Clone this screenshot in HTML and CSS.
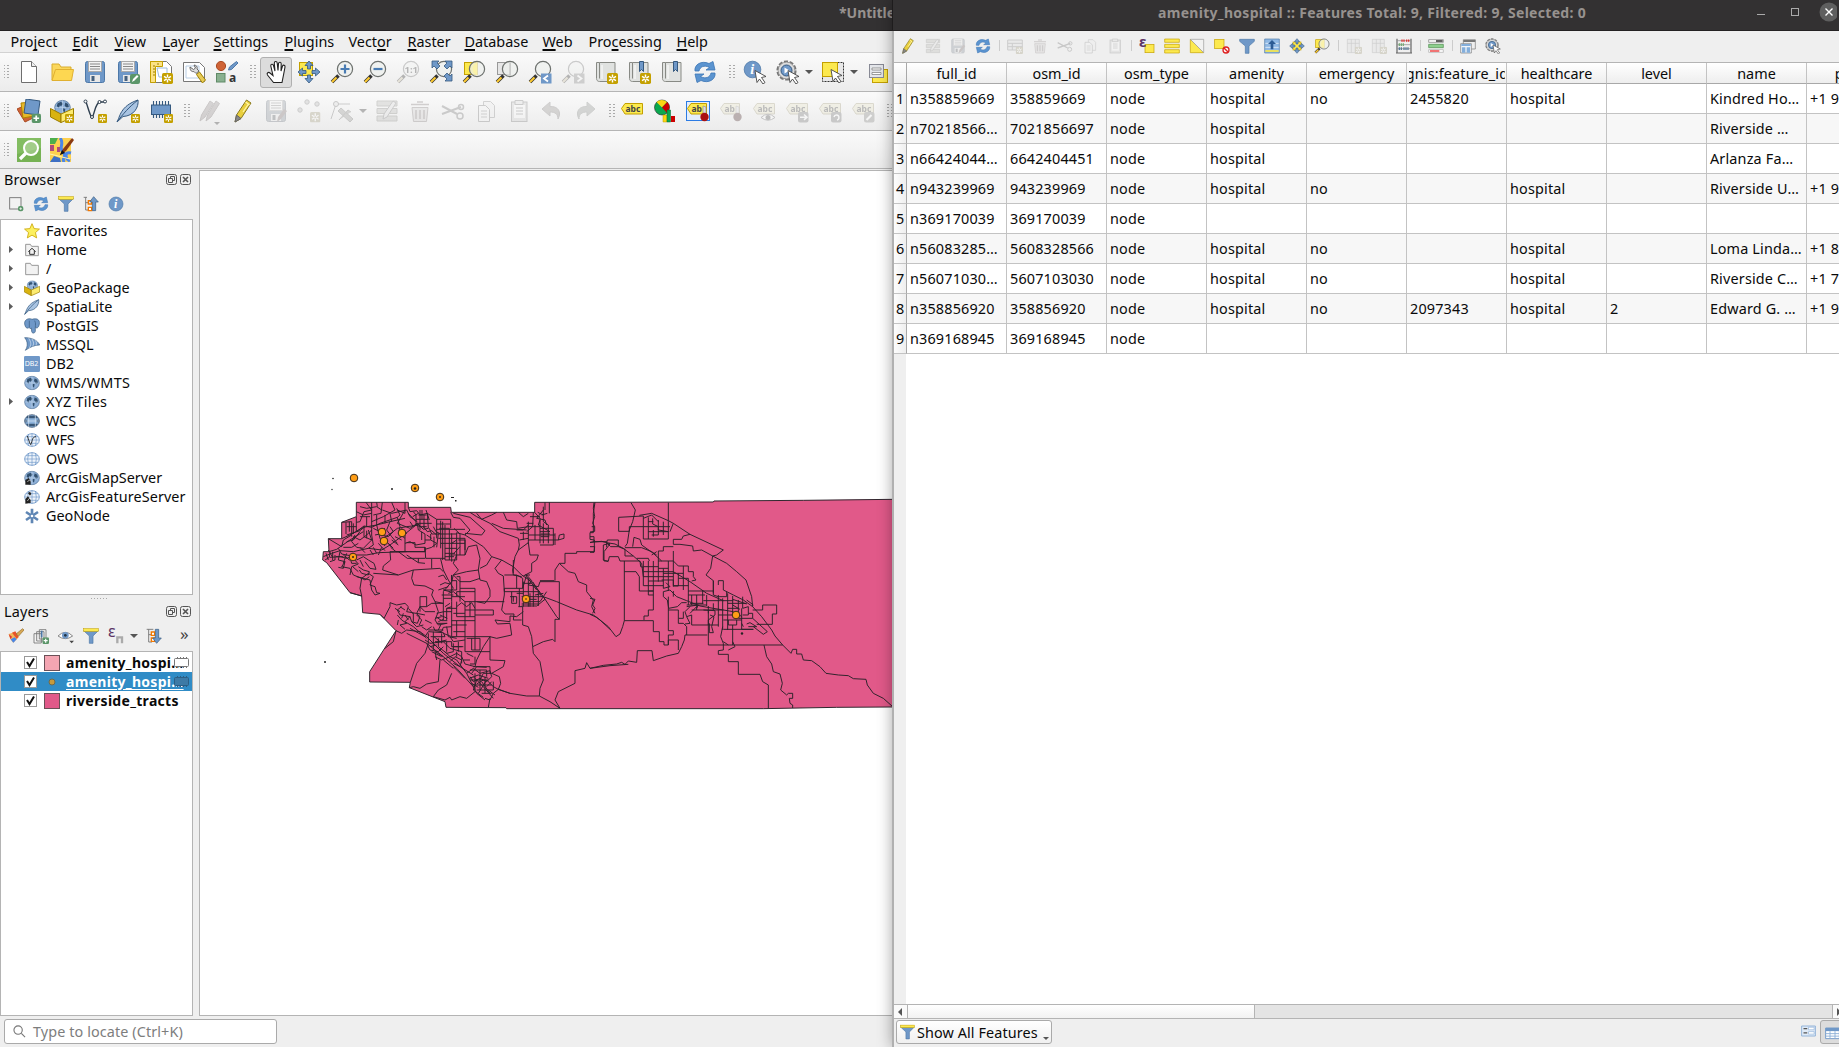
FILE: index.html
```html
<!DOCTYPE html>
<html lang="en">
<head>
<meta charset="utf-8">
<title>QGIS</title>
<link rel="stylesheet" href="styles.css">
</head>
<body>
<svg class="defs" width="0" height="0" aria-hidden="true">
<defs>
<symbol id="star" viewBox="0 0 10 10"><rect width="10" height="10" rx="1.5" fill="#c4a000"/><path d="M5 1.3v7.4M1.8 3.1l6.4 3.8M8.2 3.1L1.8 6.9" stroke="#fff" stroke-width="1.3"/><circle cx="5" cy="5" r="1" fill="#c4a000"/></symbol>
<symbol id="plusb" viewBox="0 0 10 10"><rect width="10" height="10" rx="2" fill="#5b9669"/><path d="M5 2v6M2 5h6" stroke="#fff" stroke-width="1.8"/></symbol>
<symbol id="new" viewBox="0 0 24 24"><path d="M4.500 1.500h10l5 5v16h-15z" fill="#fff" stroke="#6e6e6e"/><path d="M14.500 1.500v5h5" fill="#eee" stroke="#6e6e6e"/></symbol>
<symbol id="open" viewBox="0 0 24 24"><path d="M2 20V4h7l2 3h10v3" fill="#fbd75c" stroke="#d9ad2c"/><path d="M2 20.500L5.500 9.500H23.500L21.500 20.500z" fill="#fdd751" stroke="#e0b030"/></symbol>
<symbol id="save" viewBox="0 0 24 24"><rect x="2.500" y="1.500" width="19" height="21" rx="2" fill="#6f98c8" stroke="#4d78a8"/><rect x="5.500" y="1.500" width="13" height="10" fill="#f3f3f3" stroke="#aaa"/><path d="M7 4h10M7 6.500h10M7 9h10" stroke="#888"/><rect x="7" y="15" width="10" height="7" fill="#e8e8e8"/><rect x="8.500" y="16" width="3" height="5" fill="#45607e"/></symbol>
<symbol id="saveas" viewBox="0 0 24 24"><use href="#save"/><rect x="14" y="14" width="10" height="10" rx="2" fill="#5b9669"/><path d="M16 22l1-3 4-4 1.500 1.500-4 4z" fill="#fff"/></symbol>
<symbol id="newlay" viewBox="0 0 24 24"><path d="M1.500 1.500h16l5 5v16h-21z" fill="#fff" stroke="#777"/><path d="M1.500 1.500h12v5h-7v16h-5z" fill="#fbe285" stroke="#c4a000"/><path d="M4 6h2M4 9h2M4 12h2M4 15h2M9 3v2" stroke="#9b7d00"/><path d="M8 8h10v9h-8z" fill="none" stroke="#9abada"/><use href="#star" x="13" y="13" width="11" height="11"/></symbol>
<symbol id="laymgr" viewBox="0 0 24 24"><path d="M1.500 2.500h16l5 5v14h-21z" fill="#fff" stroke="#777"/><path d="M4 6h13v12H4z" fill="none" stroke="#b8cde4"/><path d="M8 7c0 4 2 5 4 4.500l2 2 3-2.500-2-2c1-2-1-4-3-4l1.500 3-2 1.500z" fill="#ddd" stroke="#666"/><path d="M14.500 14.500l3-2.500 6 8-3 3z" fill="#e8cb55" stroke="#9b7d00"/></symbol>
<symbol id="style" viewBox="0 0 24 24"><circle cx="6" cy="6" r="4.600" fill="#cf6336" stroke="#a94a22"/><path d="M13.500 10l1-3 7-5.500 1.500 1.500-6.500 6.500z" fill="#6f98c8" stroke="#4d78a8"/><rect x="1.500" y="13.500" width="8.500" height="8.500" fill="#89b08f" stroke="#5f8a66"/><text x="14" y="22" font-size="12" fill="#333">a</text></symbol>
<symbol id="hand" viewBox="0 0 24 24"><path d="M8.500 22.500L2.500 15C1.300 13 3.500 11.500 5 13L8 15.500 5.800 6C5.500 4 8 3.500 8.500 5.500L10 11 9.300 3.200C9.300 1 12 1 12.200 3L13 10.500 13.500 3.500C14 1.600 16.300 2 16.200 4L16 11 17.500 6C18.300 4.500 20.300 5 20 7L18.500 15 17 22.500z" fill="#fff" stroke="#222" stroke-width="1.100"/></symbol>
<symbol id="arrows" viewBox="0 0 24 24"><path d="M12 1l4 4.500h-2.500V9h-3V5.500H8zM12 23l4-4.500h-2.500V15h-3v3.500H8zM1 12l4.500-4v2.500H9v3H5.500V16zM23 12l-4.500-4v2.500H15v3h3.500V16z" fill="#6f98c8" stroke="#35597f" stroke-width=".8"/></symbol>
<symbol id="pan" viewBox="0 0 24 24"><rect x="2.500" y="2.500" width="13" height="13" fill="#fce94f" stroke="#c4a000"/><use href="#arrows"/></symbol>
<symbol id="mag" viewBox="0 0 24 24"><path d="M8.500 15.500L2 22" stroke="#333" stroke-width="3.600"/><path d="M6.500 17.500L2 22" stroke="#fcc92f" stroke-width="2.200"/><circle cx="15" cy="9" r="7.600" fill="#eef0ee" fill-opacity=".75" stroke="#6d716e" stroke-width="1.200"/></symbol>
<symbol id="zin" viewBox="0 0 24 24"><use href="#mag"/><path d="M15 4.500v9M10.500 9h9" stroke="#4a7cb3" stroke-width="2.200"/></symbol>
<symbol id="zout" viewBox="0 0 24 24"><use href="#mag"/><path d="M10.500 9h9" stroke="#4a7cb3" stroke-width="2.200"/></symbol>
<symbol id="z11" viewBox="0 0 24 24"><use href="#mag"/><text x="8.500" y="12.500" font-size="9.500" font-weight="700" fill="#333">1:1</text></symbol>
<symbol id="zfull" viewBox="0 0 24 24"><use href="#mag"/><path d="M3 1h7L8 3l3 3-3 3-3-3-2 2zM23 1v7l-2-2-3 3-3-3 3-3-2-2zM23 21h-7l2-2-3-3 3-3 3 3 2-2z" fill="#6f98c8" stroke="#35597f" stroke-width=".8"/></symbol>
<symbol id="zsel" viewBox="0 0 24 24"><rect x="2.500" y="2.500" width="13" height="12" fill="#fce94f" stroke="#c4a000"/><use href="#mag"/><path d="M15 2.500a7 7 0 0 0 0 13z" fill="#fcf3a0" opacity=".8"/></symbol>
<symbol id="zlay" viewBox="0 0 24 24"><rect x="2.500" y="2.500" width="13" height="12" fill="#e6e6e6" stroke="#999"/><use href="#mag"/><path d="M15 3v13" stroke="#bbb"/></symbol>
<symbol id="zlast" viewBox="0 0 24 24"><use href="#mag"/><rect x="13" y="13.500" width="10.500" height="10" fill="#6f98c8"/><path d="M20 15.500l-4 3 4 3" fill="none" stroke="#fff" stroke-width="1.800"/></symbol>
<symbol id="znext" viewBox="0 0 24 24"><use href="#mag"/><rect x="13" y="13.500" width="10.500" height="10" fill="#888"/><path d="M16.500 15.500l4 3-4 3" fill="none" stroke="#fff" stroke-width="1.800"/></symbol>
<symbol id="scroll" viewBox="0 0 24 24"><path d="M5.500 2.500h15.500v19H5.500c-3 0-3-3-3-3V2.500h3v16" fill="#e0e2e0" stroke="#888a85"/><path d="M8 5v14" stroke="#fff"/></symbol>
<symbol id="mapv" viewBox="0 0 24 24"><use href="#scroll"/><use href="#star" x="13" y="13" width="11" height="11"/></symbol>
<symbol id="bm" viewBox="0 0 24 24"><path d="M12.500 1.500h4v10l-2-2-2 2z" fill="#6f98c8" stroke="#35597f"/></symbol>
<symbol id="nbm" viewBox="0 0 24 24"><use href="#scroll"/><use href="#bm"/><use href="#star" x="13" y="13" width="11" height="11"/></symbol>
<symbol id="sbm" viewBox="0 0 24 24"><use href="#scroll"/><use href="#bm" x="1"/></symbol>
<symbol id="refresh" viewBox="0 0 24 24"><path d="M2 11C1 5 8 0 16 3.500L20 1.500 22 10H13L16.500 7.500C11 4.500 7 7 6 11zM22 13C23 19 16 24 8 20.500L4 22.500 2 14H11L7.500 16.500C13 19.500 17 17 18 13z" fill="#5b94d0" stroke="#3d76b5" stroke-width=".8"/></symbol>
<symbol id="cursor" viewBox="0 0 24 24"><path d="M12 10.500l11 6-4.500 1 3.500 5-2 1.500-3.500-5-2.500 3.500z" fill="#fff" stroke="#444" stroke-width=".9"/></symbol>
<symbol id="info" viewBox="0 0 24 24"><circle cx="12" cy="12" r="10.500" fill="#6f98c8" stroke="#4d78a8"/><text class="serif" x="9" y="18" font-size="18" font-style="italic" font-weight="700" fill="#fff">i</text></symbol>
<symbol id="ident" viewBox="0 0 24 24"><use href="#info" width="19" height="19"/><use href="#cursor"/></symbol>
<symbol id="gear" viewBox="0 0 24 24"><circle cx="10.500" cy="10.500" r="8.900" fill="none" stroke="#777" stroke-width="2.400" stroke-dasharray="4 1.592"/><circle cx="10.500" cy="10.500" r="8.400" fill="#dcdcdc" stroke="#888" stroke-width=".8"/><circle cx="10.500" cy="10.500" r="5.500" fill="#6f98c8" stroke="#35597f"/><path d="M8.500 7.500l5 3-5 3z" fill="#fff"/><use href="#cursor"/></symbol>
<symbol id="select" viewBox="0 0 24 24"><rect x="1.500" y="2.500" width="21" height="19" fill="#e8e8e8" stroke="#333" stroke-dasharray="2 1"/><rect x="1.500" y="2.500" width="15" height="14" fill="#fce94f" stroke="#c4a000"/><use href="#cursor" x="-2" y="-1"/></symbol>
<symbol id="form" viewBox="0 0 24 24"><rect x="6.500" y="9.500" width="15" height="13" fill="#fce94f" stroke="#c4a000"/><rect x="3.500" y="4.500" width="14" height="13" fill="#e4e6ea" stroke="#888a95"/><path d="M6 8h9v2H6zM6 12.500h9v2H6z" fill="#fff" stroke="#777" stroke-width=".7"/></symbol>
<symbol id="dsm" viewBox="0 0 24 24"><path d="M0 10L11 5l7 13-10 5z" fill="#cf6336" stroke="#a94a22"/><path d="M4 4l11-1 2 14-11 2z" fill="#e8b82a" stroke="#b08500"/><path d="M9 0l14 2-2 14-14-2z" fill="#6f98c8" stroke="#35597f"/><use href="#plusb" x="14.500" y="14.500" width="9.500" height="9.500"/></symbol>
<symbol id="globe" viewBox="0 0 24 24"><ellipse cx="12" cy="12" rx="11" ry="10" fill="#8fb1d8" stroke="#4a6c92"/><path d="M5 6l5-2 3 3-3 3-2-1-1 4-3-3zM13 13l3 1-1 5-2-2zM16 5l4 2 1 5-3 1-3-4z" fill="#31506f"/><path d="M2 12h20M12 2v20" stroke="#c6d8ec" stroke-width=".8"/></symbol>
<symbol id="gpkg" viewBox="0 0 24 24"><use href="#globe" x="4" y="0" width="17" height="17"/><path d="M.5 9.500L11 15v8.500L.5 18z" fill="#d9b310" stroke="#9b7d00"/><path d="M11 15l12.500-5.500V18L11 23.500z" fill="#fceb70" stroke="#9b7d00"/></symbol>
<symbol id="ngpkg" viewBox="0 0 24 24"><use href="#gpkg"/><use href="#star" x="15" y="15" width="9" height="9"/></symbol>
<symbol id="vee" viewBox="0 0 24 24"><path d="M3 3C5 8 6 14 9 19C12 14 12 4 17 3H22" fill="none" stroke="#2f3f4f" stroke-width="1.400"/><g fill="#fff" stroke="#2f3f4f"><circle cx="2.500" cy="2.500" r="1.500"/><circle cx="9" cy="18" r="1.500"/><circle cx="16.500" cy="3" r="1.500"/><circle cx="22" cy="2.500" r="1.500"/></g></symbol>
<symbol id="nshp" viewBox="0 0 24 24"><use href="#vee"/><use href="#star" x="15" y="15" width="9" height="9"/></symbol>
<symbol id="feather" viewBox="0 0 24 24"><path d="M1 23C4 18 4 7 22 1C23 8 18 17 7 17.500z" fill="#a9c4e2" stroke="#35597f"/><path d="M1 23C7 15 13 8 22 1" fill="none" stroke="#35597f"/></symbol>
<symbol id="nspl" viewBox="0 0 24 24"><use href="#feather"/><use href="#star" x="15" y="15" width="9" height="9"/></symbol>
<symbol id="mem" viewBox="0 0 24 24"><path d="M4.500 2v17M7.500 2v17M10.500 2v17M13.500 2v17M16.500 2v17M19.500 2v17" stroke="#35597f" stroke-width="1.100"/><rect x="2.500" y="6" width="19" height="9.500" fill="#6f98c8" stroke="#35597f"/></symbol>
<symbol id="nmem" viewBox="0 0 24 24"><use href="#mem"/><use href="#star" x="15" y="15" width="9" height="9"/></symbol>
<symbol id="pencil" viewBox="0 0 24 24"><path d="M4 23l1.500-7L15.500 1l4.500 3L10 19.500z" fill="#e9cf3c" stroke="#8a7a20"/><path d="M4 23l1.500-7 4.500 3.500z" fill="#888" stroke="#666"/><path d="M14.500 3l4 3M12 13L17.500 5" stroke="#fff6a8" stroke-width="1.200"/></symbol>
<symbol id="pencils" viewBox="0 0 24 24"><g fill="#a88" stroke="#866"><path d="M2 22l1.500-6L12 2l3.500 2.500L7 18z"/><path d="M8 22l1.500-6L18 2l3.500 2.500L13 18z"/></g></symbol>
<symbol id="savee" viewBox="0 0 24 24"><use href="#save"/><path d="M13 23l1-5 6-8 3 2-6 8z" fill="#a66"/></symbol>
<symbol id="pts" viewBox="0 0 24 24"><g fill="#bbb" stroke="#777"><circle cx="10" cy="3" r="2.200"/><circle cx="20" cy="5" r="2.200"/><circle cx="3" cy="11" r="2.200"/></g><use href="#star" x="13" y="13" width="10.500" height="10.500"/></symbol>
<symbol id="vtx" viewBox="0 0 24 24"><path d="M1 20L6 5H20" fill="none" stroke="#777"/><circle cx="6" cy="5" r="2.500" fill="#ddd" stroke="#666"/><path d="M8 12l3-3 12 11-3 3zM9 21l9-10 3 2" fill="#998" stroke="#776"/></symbol>
<symbol id="edit" viewBox="0 0 24 24"><path d="M2 2h20v5H2zM2 9.500h20v5H2zM2 17h20v5H2z" fill="#bcbcaa" stroke="#888870"/><path d="M8 20l1-5L18 2l3 2-9 14z" fill="#ddd" stroke="#777"/></symbol>
<symbol id="trash" viewBox="0 0 24 24"><path d="M4 8.500h16l-1.500 14h-13z" fill="#dcc" stroke="#977"/><path d="M3 5.500h18M9 3h6M8 11v9M12 11v9M16 11v9" stroke="#977" stroke-width="1.600"/></symbol>
<symbol id="cut" viewBox="0 0 24 24"><path d="M1 7L16 15M1 15L20 8" stroke="#777" stroke-width="2"/><circle cx="19" cy="17" r="3" fill="none" stroke="#777" stroke-width="1.500"/><circle cx="20" cy="8" r="2.500" fill="none" stroke="#777" stroke-width="1.500"/></symbol>
<symbol id="copy" viewBox="0 0 24 24"><path d="M9.500 2.500h7l4 4v12h-11z" fill="#eee" stroke="#888"/><path d="M4.500 6.500h7l4 4v12h-11z" fill="#f4f4f4" stroke="#777"/><path d="M7 12h6M7 15h6M7 18h6" stroke="#888"/></symbol>
<symbol id="paste" viewBox="0 0 24 24"><rect x="4.500" y="3" width="15.500" height="19.500" fill="#ccc" stroke="#777"/><path d="M7 6h11v13H7z" fill="#fafafa"/><path d="M8 1.500h8v4H8zM9 9h7M9 12h7M9 15h7" fill="#ddd" stroke="#777"/></symbol>
<symbol id="undo" viewBox="0 0 24 24"><path d="M2 10L10 3v4.500C18 7 22 13 18 20C18 15 15 13 10 13v4z" fill="#a09080" stroke="#877"/></symbol>
<symbol id="redo" viewBox="0 0 24 24"><path d="M22 10L14 3v4.500C6 7 2 13 6 20C6 15 9 13 14 13v4z" fill="#889888" stroke="#787"/></symbol>
<symbol id="abc" viewBox="0 0 24 24"><path d="M1.500 9.500L5 4.500H22.500V15H5z" fill="#fce94f" stroke="#c4a000"/><text x="5.500" y="12.700" font-size="8.500" font-weight="700" fill="#444">abc</text></symbol>
<symbol id="diag" viewBox="0 0 24 24"><circle cx="9" cy="8.500" r="7.500" fill="#0aa84f" stroke="#222" stroke-width=".6"/><path d="M9 8.500L3.500 3A8 8 0 0 1 14 3z" fill="#fcd612"/><path d="M9 8.500L14.300 3A8 8 0 0 1 14 14z" fill="#c00"/><path d="M10 16h4v7h-4z" fill="#fcd612" stroke="#b90" stroke-width=".5"/><path d="M14 11h3.500v12H14z" fill="#0aa84f" stroke="#063" stroke-width=".5"/><path d="M18 17h4v6h-4z" fill="#c00"/></symbol>
<symbol id="pin" viewBox="0 0 24 24"><path d="M1.500 9.500L5 4.500H20.500V15H5z" fill="#fce94f" stroke="#c4a000"/><text x="5.500" y="12.700" font-size="8.500" font-weight="700" fill="#444">ab</text><path d="M17 7l3 1v7l-3-1z" fill="#ddd" stroke="#888" stroke-width=".6"/><circle cx="18.500" cy="18" r="4.200" fill="#a11"/></symbol>
<symbol id="pinhl" viewBox="0 0 24 24"><rect x=".5" y="2.500" width="23" height="19" fill="#e4eefa" stroke="#2b7be4"/><use href="#pin"/></symbol>
<symbol id="abceye" viewBox="0 0 24 24"><use href="#abc"/><path d="M9 18.500Q16 12 23 18.500Q16 24 9 18.500z" fill="#fff" stroke="#666"/><circle cx="16" cy="18.500" r="2.500" fill="#555"/></symbol>
<symbol id="abcmv" viewBox="0 0 24 24"><use href="#abc"/><rect x="13" y="13" width="10.500" height="10.500" rx="2" fill="#777"/><path d="M15 18.200h6M19 15.500l3 2.700-3 2.700" fill="none" stroke="#fff" stroke-width="1.500"/></symbol>
<symbol id="abcrot" viewBox="0 0 24 24"><use href="#abc"/><rect x="13" y="13" width="10.500" height="10.500" rx="2" fill="#777"/><path d="M16 18a2.500 2.500 0 1 1 3 3" fill="none" stroke="#fff" stroke-width="1.500"/></symbol>
<symbol id="abced" viewBox="0 0 24 24"><use href="#abc"/><rect x="13" y="13" width="10.500" height="10.500" rx="2" fill="#887"/><path d="M15.500 21l5-5" stroke="#fff" stroke-width="2.200"/></symbol>
<symbol id="osm" viewBox="0 0 24 24"><rect width="24" height="24" fill="#76b254"/><path d="M0 0h24v10L0 16z" fill="#8cc46c" opacity=".6"/><circle cx="14" cy="10" r="7" fill="#ffffff40" stroke="#fff" stroke-width="2"/><path d="M9 15L3 21" stroke="#fff" stroke-width="3.200"/></symbol>
<symbol id="osmed" viewBox="0 0 24 24"><rect width="21" height="24" fill="#fdd04e"/><path d="M0 0h8L5 6H0z" fill="#4cae4c"/><path d="M10 0C15 5 8 10 13 14S10 22 15 24M21 15C14 13 15 21 20 23" fill="none" stroke="#4a86e8" stroke-width="3"/><path d="M0 7h4v6H0zM7 9h3v5H7z" fill="#b04a78"/><path d="M0 24l4-6 6 2 1 4z" fill="#3d6fc4"/><path d="M0 16l20 5" stroke="#fff3b0"/><path d="M10 17l3-6L22 0l2 2-8 11z" fill="#8a3a12"/><path d="M10 17l2-5 3 3z" fill="#111"/></symbol>
<symbol id="fold" viewBox="0 0 24 24"><path d="M2.500 20.500v-17h7l2 3h10v14z" fill="#f2f2f2" stroke="#8a8a8a" stroke-width="1.300"/></symbol>
<symbol id="home" viewBox="0 0 24 24"><use href="#fold"/><path d="M6.500 14.500l5.500-5 5.500 5M8.500 13v5.500h7v-5.500" fill="none" stroke="#333" stroke-width="1.500"/></symbol>
<symbol id="fav" viewBox="0 0 24 24"><path d="M12 1l3.200 7.400 8 .7-6 5.300 1.800 8L12 18.200 5 22.400l1.800-8-6-5.300 8-.7z" fill="#fcf05f" stroke="#c9a300" stroke-width="1.200"/></symbol>
<symbol id="pg" viewBox="0 0 24 24"><path d="M1 9C0 1 9 0 12 2C19 0 24 2 23 9C22 15 19 16 17 14V20C16 24 11.500 23 11.500 20L11 15C9 17 8 15 8 14C4 17 2 14 1 9z" fill="#6f98c8" stroke="#35597f"/><path d="M8 4v10M16 4C18 8 17 10 17 14" fill="none" stroke="#35597f"/></symbol>
<symbol id="ms" viewBox="0 0 24 24"><path d="M1 1C10 1 20 4 23.500 12C16 12 9 15 2 20C6 14 6 7 1 1z" fill="#6f98c8" stroke="#35597f"/><path d="M7 2C11 8 11 12 8 16.500M12 3C15 8 15 11 13 14M17 5C19 8 19 10 18 12.500" fill="none" stroke="#dce8f5"/></symbol>
<symbol id="db2" viewBox="0 0 24 24"><rect y="0" width="24" height="24" rx="2" fill="#6f98c8"/><text x="1" y="15.500" font-size="10.500" fill="#fff">DB2</text></symbol>
<symbol id="grid" viewBox="0 0 24 24"><ellipse cx="12" cy="12" rx="11" ry="9.500" fill="#eef4fb" stroke="#6f98c8" stroke-width="1.300"/><path d="M1 12h22M3 7h18M3 17h18M12 2v20M7 3Q4 12 7 21M17 3Q20 12 17 21" fill="none" stroke="#6f98c8"/></symbol>
<symbol id="wcs" viewBox="0 0 24 24"><ellipse cx="12" cy="12" rx="11" ry="9.500" fill="#8fb4dc" stroke="#24405f"/><path d="M5 4h14l2 4H3zM3 16h18l-3 4H6zM1 10h4v4H1zM19 10h4v4h-4z" fill="#3a5878"/><path d="M7 3v18M17 3v18M1 12h22" stroke="#dce8f5"/></symbol>
<symbol id="wfs" viewBox="0 0 24 24"><use href="#grid"/><path d="M5 6c2 5 3 10 5 13 3-6 2-12 8-12" fill="none" stroke="#333" stroke-width="1.500"/></symbol>
<symbol id="arcm" viewBox="0 0 24 24"><use href="#globe"/><path d="M2 22V15l5-3 3 4v6z" fill="#222"/><path d="M5 18l3-3 3 2" stroke="#eee" fill="none"/></symbol>
<symbol id="arcf" viewBox="0 0 24 24"><use href="#grid"/><path d="M2 22V15l4-4 4 5v5zM6 6l3-2 2 3-2 3z" fill="#222"/><path d="M5 18l3-4 3 2" stroke="#eee" fill="none"/></symbol>
<symbol id="gn" viewBox="0 0 24 24"><path d="M12 1v22M3 6l18 12M21 6L3 18" stroke="#5f86b4" stroke-width="4"/><circle cx="12" cy="12" r="2" fill="#fff"/></symbol>
<symbol id="funnel" viewBox="0 0 24 24"><path d="M1 4h22l-8 8v11H9.500V12z" fill="#6f98c8" stroke="#4d78a8"/><rect x="1" y="1" width="22" height="4" fill="#fce94f" stroke="#c4a000" stroke-width=".8"/></symbol>
<symbol id="bfun" viewBox="0 0 24 24"><path d="M1 2h22v3l-8 7v11H9.500V12L1 5z" fill="#6f98c8" stroke="#4d78a8"/></symbol>
<symbol id="addl" viewBox="0 0 24 24"><rect x="2.500" y="2.500" width="17" height="17" fill="#f2f2f2" stroke="#777" stroke-width="1.400"/><rect x="15" y="15" width="8" height="8" rx="3" fill="#5b9669"/><path d="M19 17v4M17 19h4" stroke="#fff"/></symbol>
<symbol id="coll" viewBox="0 0 24 24"><path d="M1 2h5M4 2v19h5M4 10h5" fill="none" stroke="#777" stroke-width="1.400"/><path d="M8 7h5v5H8zM8 17h5v5H8z" fill="#fff" stroke="#f57900" stroke-width="2"/><path d="M16 1l7 8h-4v13h-5V9h-4z" fill="#6f98c8" stroke="#35597f"/></symbol>
<symbol id="expd" viewBox="0 0 24 24"><path d="M1 2h10M4 2v19h5M4 10h5" fill="none" stroke="#777" stroke-width="1.400"/><path d="M8 6h5v5H8zM8 15h5v5H8z" fill="#fff" stroke="#f57900" stroke-width="2"/><path d="M16 23l7-8h-4V2h-5v13h-4z" fill="#6f98c8" stroke="#35597f"/></symbol>
<symbol id="brush" viewBox="0 0 24 24"><path d="M1 9l9-3 6 8-8 8C5 20 2 15 1 9z" fill="#f3b65a"/><path d="M1 9l5 4-2 4z" fill="#d33"/><path d="M4 17l6-3 3 3-5 5z" fill="#4a86e8"/><path d="M6 7l5-2 5 8-3 3z" fill="#e8532a"/><path d="M12 9L22 1l2 2-8 9z" fill="#d8a854" stroke="#96702a"/></symbol>
<symbol id="addg" viewBox="0 0 24 24"><path d="M1.500 8.500h11v14h-11zM5.500 5.500h11v14h-11zM9.500 2.500h10v14h-10z" fill="#f2f2f2" stroke="#777" stroke-width="1.300"/><path d="M13 4v10" stroke="#4d78a8" stroke-width="2.500"/><use href="#plusb" x="14" y="14" width="10" height="10"/></symbol>
<symbol id="eye" viewBox="0 0 24 24"><path d="M0 12Q11 1 22 12Q11 20 0 12z" fill="#fff" stroke="#888" stroke-width="1.500"/><circle cx="11" cy="11" r="5" fill="#6f98c8"/><circle cx="11" cy="11" r="2" fill="#234"/><path d="M17 19h7l-3.500 4z" fill="#444"/></symbol>
<symbol id="eps" viewBox="0 0 24 24"><text x="0" y="14" font-size="24" fill="#5c3566">ε</text><path d="M14 23v-9h7v9" fill="none" stroke="#aaa" stroke-width="3.500"/></symbol>
<symbol id="selx" viewBox="0 0 24 24"><rect x="9" y="9.500" width="13.500" height="12.500" fill="#fce94f" stroke="#c4a000"/><text x="0" y="13" font-size="22" font-weight="700" fill="#5c3566">ε</text></symbol>
<symbol id="selall" viewBox="0 0 24 24"><path d="M1 1.500h22v5H1zM1 9.500h22v5H1zM1 17.500h22v5H1z" fill="#fce94f" stroke="#c4a000"/></symbol>
<symbol id="inv" viewBox="0 0 24 24"><path d="M2 2v20h20z" fill="#fce94f" stroke="#c4a000"/><path d="M2 2h20v20z" fill="#f2f2f2" stroke="#999"/></symbol>
<symbol id="desel" viewBox="0 0 24 24"><rect x="1" y="2" width="14" height="14" fill="#fce94f" stroke="#c4a000"/><circle cx="18" cy="18" r="4.500" fill="#fff" stroke="#d22" stroke-width="2"/><path d="M15 15l6 6" stroke="#d22" stroke-width="2"/></symbol>
<symbol id="top" viewBox="0 0 24 24"><path d="M1 1.500h22v21H1z" fill="#8fb8e4" stroke="#4d78a8"/><path d="M2 8h20M2 14h20" stroke="#fff"/><path d="M2 18h20v3H2z" fill="#e8e060"/><path d="M12 3l6 6h-4v8h-4V9H6z" fill="#2d5c94"/></symbol>
<symbol id="pansel" viewBox="0 0 24 24"><rect x="6" y="6" width="12" height="12" fill="#fce94f" stroke="#c4a000"/><use href="#arrows"/></symbol>
<symbol id="fld" viewBox="0 0 24 24"><path d="M2 2h18v20H2zM2 8h18M8 2v20M14 2v20" fill="#ddd" stroke="#888"/><use href="#star" x="13" y="13" width="11" height="11"/></symbol>
<symbol id="row" viewBox="0 0 24 24"><path d="M1 3h22v15H1zM1 8h22M1 13h22M8 8v10" fill="#ddd" stroke="#888" stroke-width="1.500"/><use href="#star" x="13" y="13" width="11" height="11"/></symbol>
<symbol id="abacus" viewBox="0 0 24 24"><path d="M1.500 1v22M22.500 1v22M0 22.500h24" stroke="#666" stroke-width="1.800"/><path d="M2 4h20M2 10h20M2 16h20" stroke="#888"/><path d="M8 4h5M15 4h5" stroke="#d33" stroke-width="3.500" stroke-dasharray="2 1"/><path d="M4 10h9" stroke="#7a7" stroke-width="4" stroke-dasharray="2 1"/><path d="M4 16h5M11 16h9" stroke="#5a7a98" stroke-width="4" stroke-dasharray="2 1"/></symbol>
<symbol id="cond" viewBox="0 0 24 24"><path d="M1 2.500h22v4H1z" fill="#fff" stroke="#777"/><path d="M1 9.500h22v5H1z" fill="#8ed08e" stroke="#4a8a4a"/><path d="M1 17.500h22v4H1z" fill="#fff" stroke="#aaa"/><path d="M12 4.500h10" stroke="#444" stroke-width="2.500"/><path d="M3 19.500h14" stroke="#e33" stroke-width="2"/></symbol>
<symbol id="dock" viewBox="0 0 24 24"><path d="M5 2.500h18v14H5z" fill="#eee" stroke="#777"/><path d="M5 3h18v3H5z" fill="#777"/><path d="M1 8.500h16v14H1z" fill="#eef4fb" stroke="#777"/><path d="M2 9h14v3H2zM3 14h5v8H3zM10 14h5v8h-5z" fill="#83aedb"/></symbol>
<symbol id="fv" viewBox="0 0 24 24"><path d="M1 4h22v16H1z" fill="#e0ebf7" stroke="#8fb1d8" stroke-width="1.500"/><path d="M4 8h6M4 15h6" stroke="#555" stroke-width="2"/><path d="M12 6h9v4h-9zM12 13h9v4h-9z" fill="#fff" stroke="#8fb1d8"/></symbol>
<symbol id="tv" viewBox="0 0 24 24"><path d="M1 4h22v17H1z" fill="#fff" stroke="#6f98c8" stroke-width="1.500"/><path d="M1 4h22v5H1z" fill="#6f98c8"/><path d="M1 13h22M1 17h22M8 9v12M16 9v12" stroke="#8fb1d8" stroke-width="1.500"/></symbol>
<symbol id="chip" viewBox="0 0 18 13"><path d="M4.500 1v11M7.500 1v11M10.500 1v11M13.500 1v11" stroke="currentColor"/><rect x="1.500" y="2.500" width="14" height="8" rx="1" fill="var(--chip)" stroke="currentColor"/></symbol>
</defs>
</svg>

<div class="main">
<div class="titlebar"><span class="maintitle">*Untitled Project — QGIS</span></div>
<nav class="menu"><span>Pro<u>j</u>ect</span><span><u>E</u>dit</span><span><u>V</u>iew</span><span><u>L</u>ayer</span><span><u>S</u>ettings</span><span><u>P</u>lugins</span><span>Vect<u>o</u>r</span><span><u>R</u>aster</span><span><u>D</u>atabase</span><span><u>W</u>eb</span><span>Pro<u>c</u>essing</span><span><u>H</u>elp</span></nav>
<div class="toolbar">
<i class="grip"></i>
<b><svg><use href="#new"/></svg></b><b><svg><use href="#open"/></svg></b><b><svg><use href="#save"/></svg></b><b><svg><use href="#saveas"/></svg></b><b><svg><use href="#newlay"/></svg></b><b><svg><use href="#laymgr"/></svg></b><b><svg><use href="#style"/></svg></b>
<i class="grip"></i>
<b class="on"><svg><use href="#hand"/></svg></b><b><svg><use href="#pan"/></svg></b><b><svg><use href="#zin"/></svg></b><b><svg><use href="#zout"/></svg></b><b class="off"><svg><use href="#z11"/></svg></b><b><svg><use href="#zfull"/></svg></b><b><svg><use href="#zsel"/></svg></b><b><svg><use href="#zlay"/></svg></b><b><svg><use href="#zlast"/></svg></b><b class="off"><svg><use href="#znext"/></svg></b><b><svg><use href="#mapv"/></svg></b><b><svg><use href="#nbm"/></svg></b><b><svg><use href="#sbm"/></svg></b><b><svg><use href="#refresh"/></svg></b>
<i class="grip"></i>
<b><svg><use href="#ident"/></svg></b><b class="drop"><svg><use href="#gear"/></svg></b><b class="drop"><svg><use href="#select"/></svg></b><b><svg><use href="#form"/></svg></b>
</div>
<div class="toolbar">
<i class="grip"></i>
<b><svg><use href="#dsm"/></svg></b><b><svg><use href="#ngpkg"/></svg></b><b><svg><use href="#nshp"/></svg></b><b><svg><use href="#nspl"/></svg></b><b><svg><use href="#nmem"/></svg></b>
<i class="grip"></i>
<b class="off mini"><svg><use href="#pencils"/></svg></b><b><svg><use href="#pencil"/></svg></b><b class="off"><svg><use href="#savee"/></svg></b><b class="off"><svg><use href="#pts"/></svg></b><b class="off drop"><svg><use href="#vtx"/></svg></b><b class="off"><svg><use href="#edit"/></svg></b><b class="off"><svg><use href="#trash"/></svg></b><b class="off"><svg><use href="#cut"/></svg></b><b class="off"><svg><use href="#copy"/></svg></b><b class="off"><svg><use href="#paste"/></svg></b><b class="off"><svg><use href="#undo"/></svg></b><b class="off"><svg><use href="#redo"/></svg></b>
<i class="grip tight"></i>
<b><svg><use href="#abc"/></svg></b><b><svg><use href="#diag"/></svg></b><b><svg><use href="#pinhl"/></svg></b><b class="off"><svg><use href="#pin"/></svg></b><b class="off"><svg><use href="#abceye"/></svg></b><b class="off"><svg><use href="#abcmv"/></svg></b><b class="off"><svg><use href="#abcrot"/></svg></b><b class="off"><svg><use href="#abced"/></svg></b>
<i class="grip tight"></i>
</div>
<div class="toolbar"><i class="grip"></i><b><svg><use href="#osm"/></svg></b><b><svg><use href="#osmed"/></svg></b></div>

<div class="body">
<aside class="docks">
<section class="dock browser">
<header><span>Browser</span><svg class="wb" viewBox="0 0 11 11"><rect x=".5" y=".5" width="10" height="10" rx="2"/><path d="M4.500 4.500v-2h4v4h-2M2.500 4.500h4v4h-4z"/></svg><svg class="wb" viewBox="0 0 11 11"><rect x=".5" y=".5" width="10" height="10" rx="2"/><path class="x" d="M3 3l5 5M8 3L3 8"/></svg></header>
<div class="mini-tools"><svg><use href="#addl"/></svg><svg><use href="#refresh"/></svg><svg><use href="#funnel"/></svg><svg><use href="#coll"/></svg><svg><use href="#info"/></svg></div>
<ul class="tree">
<li><svg><use href="#fav"/></svg><span>Favorites</span></li>
<li class="ex"><svg><use href="#home"/></svg><span>Home</span></li>
<li class="ex"><svg><use href="#fold"/></svg><span>/</span></li>
<li class="ex"><svg><use href="#gpkg"/></svg><span>GeoPackage</span></li>
<li class="ex"><svg><use href="#feather"/></svg><span>SpatiaLite</span></li>
<li><svg><use href="#pg"/></svg><span>PostGIS</span></li>
<li><svg><use href="#ms"/></svg><span>MSSQL</span></li>
<li><svg><use href="#db2"/></svg><span>DB2</span></li>
<li><svg><use href="#globe"/></svg><span class="wide">WMS/WMTS</span></li>
<li class="ex"><svg><use href="#globe"/></svg><span class="wide">XYZ Tiles</span></li>
<li><svg><use href="#wcs"/></svg><span>WCS</span></li>
<li><svg><use href="#wfs"/></svg><span>WFS</span></li>
<li><svg><use href="#grid"/></svg><span>OWS</span></li>
<li><svg><use href="#arcm"/></svg><span>ArcGisMapServer</span></li>
<li><svg><use href="#arcf"/></svg><span class="long">ArcGisFeatureServer</span></li>
<li><svg><use href="#gn"/></svg><span>GeoNode</span></li>
</ul>
</section>
<div class="split"></div>
<section class="dock layers">
<header><span>Layers</span><svg class="wb" viewBox="0 0 11 11"><rect x=".5" y=".5" width="10" height="10" rx="2"/><path d="M4.500 4.500v-2h4v4h-2M2.500 4.500h4v4h-4z"/></svg><svg class="wb" viewBox="0 0 11 11"><rect x=".5" y=".5" width="10" height="10" rx="2"/><path class="x" d="M3 3l5 5M8 3L3 8"/></svg></header>
<div class="mini-tools"><svg><use href="#brush"/></svg><svg><use href="#addg"/></svg><svg><use href="#eye"/></svg><svg><use href="#funnel"/></svg><svg><use href="#eps"/></svg><i class="caret"></i><svg><use href="#expd"/></svg><span class="more">»</span></div>
<ul class="layerlist">
<li><svg class="cb" viewBox="0 0 13 13"><rect x=".5" y=".5" width="12" height="12"/><path d="M3 6l2.500 4L10 2.500"/></svg><i class="sw pale"></i><span>amenity_hospi…</span><svg class="chip"><use href="#chip"/></svg></li>
<li class="sel"><svg class="cb" viewBox="0 0 13 13"><rect x=".5" y=".5" width="12" height="12"/><path d="M3 6l2.500 4L10 2.500"/></svg><svg class="sw dot" viewBox="0 0 16 16"><circle cx="8" cy="8" r="3"/></svg><span>amenity_hospi…</span><svg class="chip"><use href="#chip"/></svg></li>
<li><svg class="cb" viewBox="0 0 13 13"><rect x=".5" y=".5" width="12" height="12"/><path d="M3 6l2.500 4L10 2.500"/></svg><i class="sw pink"></i><span>riverside_tracts</span></li>
</ul>
</section>
</aside>
<div class="map">
<svg viewBox="200 171 1639 844" preserveAspectRatio="xMinYMin slice">
<g transform="translate(310 460) scale(.33333)" class="tracts">
<path class="area" d="M139 127H295V142H422L424 157H674V127H840L1210 126 1212 123 1480 121 1750 118V741L1580 742 1360 746H590L588 743 408 742 405 725 298 683 301 667 179 666V635L258 512 210 463 158 458 155 408 120 398 50 308 38 300 40 275 57 275 55 236H95V187L139 170z"/>
<path d="M185 127V225M168 127L185 150 162 155 150 185 139 187M217 127L213 160 190 165M245 127L255 150 220 170 185 185M217 150L245 160 290 150 300 170 322 185M295 142L300 155 320 152 330 165 352 160 355 205 340 208 322 190 300 205 262 190M262 190L285 150M95 187L125 185V230M108 187V222M118 185V215M139 170V215L162 198 185 202 210 190 262 172M110 225L150 212 165 200M95 236L120 225 160 202 200 195 240 185 285 175M55 236L95 260 100 240 125 225M57 275L80 268 120 240 160 215M40 290L65 280 90 272 130 275 175 265 215 270 240 255 285 222 322 192M60 292L90 290 110 295 140 285 170 285 205 278 290 275M185 225L190 255 175 265M175 210L185 240 160 265 140 262 125 245 135 225M162 198V230L185 240M200 195L210 235 225 258M210 240L240 222 262 205 290 200 330 195M240 185L230 210 245 230 262 250M262 172L270 200 265 222M285 222V275H345V262H315V248H290M285 250L300 245 318 255 345 250V222L325 210 322 192M242 262L258 275 285 275M225 240L245 262M205 250L225 272"/>
<path d="M318 165V195M330 150V210M342 165V205M318 178H355M318 190H365M295 160L318 185M352 160L380 178H422V205M380 178V235M392 182V265M405 195V300M418 205V300M380 192H420M380 208H465M365 222H440M385 235H465V285H418M392 250H465M405 265H440M405 280H435M345 262L347 295H405M362 222V240L380 250 365 262 345 268M340 200L352 215 365 212 380 225M422 157L430 172 450 175 480 210 465 225 440 218V300M425 220V305M432 205L450 222V285M465 240V270M370 200L378 215 392 222M405 300H440M290 275L240 275 242 300 220 318 218 330 265 345 310 330 390 325 400 335M265 275L292 295H345M290 285L325 308 345 310M325 295V308M365 297V325M345 262V275H290M392 297L400 330 415 360 430 385 420 395 400 390M310 330L305 355 312 375 345 378 370 390 365 405 375 425 400 430"/>
<path d="M60 275L58 292 45 300M75 285V300L60 305M90 275L85 300 105 305 95 320 120 325 130 345 155 355 175 340 190 350 180 375 195 380 200 398 210 400 195 405 185 390 180 360 140 350M100 285L118 300 130 295 145 312 125 320 120 345M140 300L160 290 175 300 192 310 198 328 180 325 165 305M145 320L160 330 178 335 175 345 155 340 148 330M105 305L100 325 85 322M155 355L150 385 155 408M190 340L265 345M178 350L165 360 150 352M120 398L155 408"/>
<path d="M150 140L170 145 200 140 215 150M139 155L160 165 185 160M150 170H180M139 200H110M130 190V222M170 170V200M200 165V195M225 165V190M240 160L245 185M260 145L270 165 262 172M200 127L202 140M285 127V160L262 150M130 230L150 240 170 225 185 210M110 245L130 240 150 215M100 262L125 262 145 250M85 265L95 282 125 288M150 262L165 278M190 262L200 280M215 262L205 285M180 270L190 285M235 250L250 265M245 240L265 255M255 230L275 240M268 222L285 235M215 225L235 230 250 215 240 200M190 205L210 215 225 205M170 212V235M195 225L210 222M275 205L290 222M300 185L310 200M308 170L325 160M310 155L318 165M48 280L55 300M55 270L68 292M68 275V300M78 290H100M110 280L100 310M118 285L125 310 140 310M128 320L145 335M150 300L160 320M335 215V240M350 225L365 235M372 230V262M388 205H418M398 185V300M385 220L380 262M445 240H465M405 290H432M425 250L440 240M432 280L450 260M345 240H362M358 205L365 222M325 165H350M325 200H350M336 150V178M348 150L358 180"/>
<path d="M430 160L480 172 525 212 515 225 465 220M480 157L500 170 540 190 570 215 625 235 628 255 625 270M500 160L515 178 545 165 560 157M580 157L590 180 620 185 622 205 655 200M545 190L580 205 650 210M625 157L640 170 655 160M465 225L520 260 545 290 575 300 610 320 635 345 665 365 700 410 740 425 800 450 850 465 870 480 900 508M465 285L475 260 500 255 510 295 505 330 470 335 430 345 425 365 400 395M440 285L430 310 445 330 430 345M575 300L555 325 565 340 580 348 583 395M545 290L530 315 510 325M625 270L615 290 608 330 610 345 635 350M625 270L655 248 660 285 685 285 680 300 665 310V335L640 348M610 300V340M583 345H620L638 355V385H583V405L575 450 585 462H612L610 480H635M620 347V385M505 330L510 360 530 365 540 390V410L525 430 500 425M430 345L450 365 480 365 510 355"/>
<path d="M655 185V250M670 157L668 200 650 215M674 157L690 175V250M700 140V185L715 195V250M718 127V160M690 205H730V255H690M680 175L705 180 710 195M690 180L685 195 720 215M655 225H735M655 240H745L748 225 762 222 762 235 745 240M690 215H720M692 230H718M628 240L655 235M655 195L640 210 620 210M700 150L680 175M655 200H690M735 220V255M705 127V150M660 170H690M695 165L712 160M650 190H670M675 195V240M700 190V250M692 222H720M630 220H655M640 215V240M683 157L700 165"/>
<path d="M638 385L650 345 665 362 655 375 685 380 690 365H748V478H735V545L728 538 700 545 668 560 665 530 655 500 638 495V440H625M640 365V440M655 355V440M670 375V440M685 395V438M583 395H690M605 395V430H620V410H600M620 400H640M635 410H700L705 418 680 438H635M640 425H690M660 400V440M700 410L740 470 748 478M668 365L695 410M650 350L680 390M710 395L690 425M640 455L620 470 600 468 600 485 555 480 562 492 600 490 605 525 560 535 540 530M668 560L670 580 690 605 700 660 690 685 688 708M748 310L735 330V362M733 362H690M748 310H765V280H800V275H853V240L840 238V218H850V160L855 127M748 310L775 335 795 340 805 365 830 375V395L850 420 845 440 855 460M850 245H890V262M900 250L880 255V300L895 305M610 408V425M628 385V440M640 418H680M635 432H685M675 405L700 400M645 345H660M640 370H665"/>
<path d="M400 390H440V362H425V345M440 350H450V385H495V395H440M400 395V480M425 345V425M415 400L430 395 465 425 495 425M440 425V470H495M495 395V530M425 425V530H495M465 425V575M440 440L455 428 470 440 485 428 495 445M425 440L410 445V480M495 450H550V465H495M495 425H583M425 482H495M425 495H470M440 482V530M430 515H465M465 450H495M480 425V470M440 410V395M450 385V425M410 445H440M400 430H365L350 440V410H330V440L345 455 375 455M375 425L385 455 375 480 385 495 410 490M390 465L412 475M378 470L395 482 412 482M380 490H412M425 500L400 502 395 515 375 512 370 500M330 440L320 460 345 465M410 500L415 530 440 535M400 520L425 530M385 350L400 345 410 360M390 375L405 368 420 372M385 390L415 380M395 405L430 405M425 410H465M400 415H425M402 455H425M380 460L402 455M375 475L395 470M385 485L400 478M392 495L385 510M430 460H465M405 440L420 430"/>
<path d="M240 428L260 435 285 430 295 440 290 455 318 460 330 470 322 490 305 485 300 470 270 465 262 450 275 440M258 512L275 520 290 510 330 515 350 530 400 580 450 620 490 645M240 428V440L222 475 210 463M262 465L275 480 290 490 270 495 285 508M300 470L285 485 310 500 350 535M265 480L262 495M290 520L350 550 400 590 440 625 490 680M300 505L345 530 355 515 400 518 405 530M355 520V550M370 515V570M345 540L360 550 400 545 420 565 455 575M350 550L360 570 385 575 400 560M385 535V560M375 545H425V560H460M375 590L395 600 420 590 440 580 455 590 465 612M380 600L375 575 400 590M420 530L430 545 465 540M420 605L435 590 455 600 450 620 430 610M440 600L470 640 500 700 525 720M465 575H540V600L585 602 580 620 545 640 520 640M540 530V575M495 530H540L520 560 500 600 495 620 465 612M470 535H510V570H485V535M495 530V570M455 575V610M440 575V590M430 550V575M480 612H495V590"/>
<path d="M270 440L285 450M255 445L270 455M280 460L275 475M295 445L310 462M285 465L295 480M310 460V485M320 465L335 480 328 495M305 485L320 500 340 495M335 500L350 510 365 500M345 480L365 490M355 510H400M362 530H405M360 560L380 555M372 530L390 545 410 540M395 520V550M410 545V575M385 560L410 580 430 575M365 575L395 590M405 575L420 590 440 600M430 560H455M445 545V575M400 600L430 625M470 580L490 590M460 600L480 600M330 455V440H350"/>
<path d="M490 620H540V640M480 630H530V650M470 640L490 625 510 640 540 632 545 650 530 665 510 655 490 665 480 650M495 640V690M510 630V690M525 650V700M480 660H535M490 675H545M500 690H550M490 650L520 680 550 715M505 700L530 660 550 680 565 688 550 700 540 720 525 715M545 640L568 650 572 670 565 688M490 690L520 712M515 665L540 700M500 660L490 690M520 640L510 660M550 665V690M600 700L565 688M430 620L465 655M425 640L410 675 385 690 370 710 405 720 420 712 425 720 450 710 470 715 495 695M390 600L385 665 350 672 330 685 310 680 298 683M301 667L320 610 345 580 355 550M258 512L250 545 225 565M565 688L600 700 650 708 688 708 720 725 750 745M540 715L535 742M750 745L735 720 745 695 795 670V632L825 625 830 608 840 625 900 617L955 613M485 640L500 620 530 622M478 655L505 645 535 655M500 672L520 660M535 690L555 705M515 700H545M485 670L505 682M530 680L545 665"/>
</g>
<g transform="translate(590 480) scale(.33333)" class="tracts">
<path d="M0 187L35 184 50 188 75 192 100 205 130 228 155 250 160 290M0 156L14 154 14 140 5 140M12 68L10 85 14 110 8 130 14 140M0 170H12V185L0 188M0 200H14L12 217H0M123 68L136 90 128 125 118 150 112 190 105 200M235 68V125M160 108L86 112V154H118V140H160M148 106L185 100 235 122 250 130 300 163 400 210 380 225 368 228 335 210 310 213 308 198 270 193 250 193V178H275L280 168 300 163M250 130L240 155"/>
<path d="M160 108V177H235V125M175 112V177M188 115V132L205 140V165M160 140H240M175 155H235M190 150V170M205 120V150M220 125V165M175 125H190M205 150L235 155M160 115L185 105 205 125M185 165H205M368 228L410 250 440 275 468 300 485 350 488 380 515 410 545 450 555 468 578 495 603 520 608 508H620V522H635L640 540 665 542 690 560 708 580 745 585 775 587 790 596 828 598 832 615 850 640 880 655 908 680M368 228L362 265 348 285 370 302V340M385 315V302H400V330L430 345 460 360 488 380"/>
<path d="M128 200L132 172 150 178 155 195 190 220 215 243M105 203H155L185 215 200 225M85 200H62L50 188 52 180H85V200L105 208V228H130M60 192L42 215V243H55L58 230H85L90 243H150L152 260 160 262M103 243V422H190M103 422L98 440 90 462 78 470 55 440 20 412 0 403M0 355L15 358 8 375 15 385 8 400M103 275H138L148 290V333H190V390H175V408H162V420M175 333V345H190M190 422V455H208V485H222V495H235V480H265V510M235 495V465H250V452H235V350M0 565L40 556 80 552 95 547 105 553 115 543 140 547 142 512H186L190 542 230 528 265 520 275 500 283 480 285 465H352"/>
<path d="M160 243V317H220M175 243V333H190V243M205 213V290M160 260H205M160 275H250M160 290H250M175 303H220M205 243H250M220 265V325M235 243V333M250 213V320M205 213H220V200H250M185 225L200 215M140 235L175 235 178 243M205 265H235M215 300H250V317H295M228 308L240 320 220 325M250 243L265 258H295V275H310V290L318 300 305 303M250 280H280M265 280V318H250M265 295H295V375M280 258V330M205 290V305M220 280H250M250 275L300 305 350 340 400 362M220 335L240 330 260 350 290 362 330 378 370 385 430 395M220 335V350L232 360 236 385 262 380 275 368 290 368M250 333V350"/>
<path d="M295 333H370M295 345H345M370 302V345L385 350H410V335M290 375H350M305 345V375M320 345V390M338 330V372M350 345V378M340 362H430M355 378V400M370 370V390M385 345V440M398 355V450M413 340V450M428 348V405M445 360V400M458 350V385L475 380V405H458M340 390H400M385 405H430M400 420H455M455 385V448H490M300 380L285 395 290 410 305 405V435H355V390M280 395V415H265V390H235M290 410L300 430 285 432M265 415V430H280L290 440V465M305 390H340L375 392 375 405 355 420V435M413 370H470M428 358L470 372M413 385H445M428 375L450 388M415 420V435H440V420M470 360L490 375M475 400H488V415H445M435 395L455 410M360 405L372 410 365 440 370 458H358V430M290 380L325 375 320 385M300 370H340M300 400L320 380"/>
<path d="M355 435V495H578M355 435H385M428 435V495M398 440L392 470 400 490V510L385 512V523H415V545H445V583H510L518 605 535 615V685M400 485L415 495M428 485L435 500 415 510M522 495L530 530 545 552 550 575 570 582 577 610 572 630 590 645 595 640H608V655H598L600 670 608 675V684M488 390H518V375H560V402H547V433H500M488 415L510 435 532 455 520 463 490 440M400 448H490M470 432L480 428 500 440 475 440M455 430L460 440"/>
</g>
<g class="tiny"><circle cx="333" cy="478.500" r=".8"/><circle cx="332" cy="489.500" r=".7"/><circle cx="392" cy="489" r="1"/><circle cx="325" cy="662" r="1"/><path d="M451 497h3v1h-3zM455 500h1.500v1.500H455z"/><circle cx="742" cy="633.500" r="1.200"/></g>
<g class="pts"><circle cx="354" cy="478" r="3.800"/><circle cx="415" cy="488" r="3.800"/><circle cx="440" cy="497" r="3.800"/><circle cx="382" cy="532" r="3.800"/><circle cx="402" cy="533" r="3.800"/><circle cx="384" cy="541" r="3.800"/><circle cx="353" cy="557" r="3.800"/><circle cx="526" cy="599" r="3.800"/><circle cx="736" cy="615" r="3.800"/></g>
<g class="tiny"><circle cx="415" cy="488.500" r="1.300"/><circle cx="440" cy="497" r=".9"/><circle cx="353" cy="557" r="1"/><circle cx="526" cy="599" r=".8"/></g>
</svg>
</div>
</div>
<footer class="status"><div class="locate"><svg viewBox="0 0 14 14"><circle cx="5.500" cy="5.500" r="4.500"/><path d="M9 9l4 4"/></svg><span>Type to locate (Ctrl+K)</span></div></footer>
</div>

<div class="attr">
<div class="titlebar"><span class="atitle">amenity_hospital :: Features Total: 9, Filtered: 9, Selected: 0</span>
<svg class="winctl" viewBox="0 0 84 31"><path d="M4 14.500h8" stroke="#aaa"/><rect x="38.500" y="8.500" width="7" height="7" fill="none" stroke="#aaa"/><circle cx="76" cy="12" r="9.500" fill="#5f5f5f"/><path d="M72.500 8.500l7 7M79.500 8.500l-7 7" stroke="#fff" stroke-width="1.400"/></svg></div>
<div class="atools">
<svg><use href="#pencil"/></svg><svg class="off"><use href="#edit"/></svg><svg class="off"><use href="#savee"/></svg><svg><use href="#refresh"/></svg><i></i><svg class="off"><use href="#row"/></svg><svg class="off"><use href="#trash"/></svg><svg class="off"><use href="#cut"/></svg><svg class="off"><use href="#copy"/></svg><svg class="off"><use href="#paste"/></svg><i></i><svg><use href="#selx"/></svg><svg><use href="#selall"/></svg><svg><use href="#inv"/></svg><svg><use href="#desel"/></svg><svg><use href="#bfun"/></svg><svg><use href="#top"/></svg><svg><use href="#pansel"/></svg><svg><use href="#zsel"/></svg><i></i><svg class="off"><use href="#fld"/></svg><svg class="off"><use href="#fld"/></svg><svg><use href="#abacus"/></svg><i></i><svg><use href="#cond"/></svg><i></i><svg><use href="#dock"/></svg><svg><use href="#gear"/></svg>
</div>
<div class="tablebox">
<table>
<tr><th></th><th>full_id</th><th>osm_id</th><th>osm_type</th><th>amenity</th><th>emergency</th><th class="tightcol"><span>gnis:feature_id</span></th><th>healthcare</th><th>level</th><th>name</th><th>phone</th></tr>
<tr><th>1</th><td>n358859669</td><td>358859669</td><td>node</td><td>hospital</td><td>no</td><td>2455820</td><td>hospital</td><td></td><td>Kindred Ho…</td><td>+1 9</td></tr>
<tr><th>2</th><td>n70218566…</td><td>7021856697</td><td>node</td><td>hospital</td><td></td><td></td><td></td><td></td><td>Riverside …</td><td></td></tr>
<tr><th>3</th><td>n66424044…</td><td>6642404451</td><td>node</td><td>hospital</td><td></td><td></td><td></td><td></td><td>Arlanza Fa…</td><td></td></tr>
<tr><th>4</th><td>n943239969</td><td>943239969</td><td>node</td><td>hospital</td><td>no</td><td></td><td>hospital</td><td></td><td>Riverside U…</td><td>+1 9</td></tr>
<tr><th>5</th><td>n369170039</td><td>369170039</td><td>node</td><td></td><td></td><td></td><td></td><td></td><td></td><td></td></tr>
<tr><th>6</th><td>n56083285…</td><td>5608328566</td><td>node</td><td>hospital</td><td>no</td><td></td><td>hospital</td><td></td><td>Loma Linda…</td><td>+1 8</td></tr>
<tr><th>7</th><td>n56071030…</td><td>5607103030</td><td>node</td><td>hospital</td><td>no</td><td></td><td>hospital</td><td></td><td>Riverside C…</td><td>+1 7</td></tr>
<tr><th>8</th><td>n358856920</td><td>358856920</td><td>node</td><td>hospital</td><td>no</td><td>2097343</td><td>hospital</td><td>2</td><td>Edward G. …</td><td>+1 9</td></tr>
<tr><th>9</th><td>n369168945</td><td>369168945</td><td>node</td><td></td><td></td><td></td><td></td><td></td><td></td><td></td></tr>
</table>
</div>
<div class="hscroll"><i class="l"></i><div class="thumb"></div><i class="r"></i></div>
<div class="afoot"><div class="btn"><svg><use href="#funnel"/></svg><span>Show All Features</span><i class="sm"></i></div><div class="views"><span><svg><use href="#fv"/></svg></span><span class="act"><svg><use href="#tv"/></svg></span></div></div>
</div>
</body>
</html>
```
FILE: styles.css
```css
* { box-sizing: border-box; }
html, body { margin: 0; height: 100%; overflow: hidden; }
body { position: relative; background: #efefef; color: #0a0a0a; font: 14.4px/19px "Noto Sans", "Open Sans", sans-serif; }
svg { display: block; overflow: hidden; flex: none; }
svg text { font-family: "Noto Sans", sans-serif; }
svg text.serif { font-family: "Liberation Serif", serif; }
.defs { position: absolute; }
i { font-style: normal; }

.main { width: 1839px; height: 1047px; display: flex; flex-direction: column; }
.titlebar { height: 31px; flex: none; background: #333132; border-bottom: 1px solid #242223; color: #97928f; font-weight: 700; font-size: 14px; letter-spacing: .3px; line-height: 25px; white-space: nowrap; }
.maintitle { display: block; margin-left: 839px; letter-spacing: 0; }
.menu { height: 22px; flex: none; display: grid; grid-template-columns: 62px 42px 48px 51px 71px 64px 59px 57px 78px 46px 88px 60px; padding-left: 10.5px; border-bottom: 1px solid #d2d2d2; line-height: 21px; white-space: nowrap; }
.menu u { text-underline-offset: 2px; text-decoration-thickness: 1.5px; text-decoration-skip-ink: none; }

.toolbar { height: 39px; flex: none; display: flex; align-items: center; background: linear-gradient(#fafafa, #ececec); border-bottom: 1px solid #b5b5b5; }
.toolbar:nth-of-type(4) { height: 38px; }
.toolbar b { width: 33px; height: 31px; flex: none; display: flex; align-items: center; padding-left: 4.5px; position: relative; }
.toolbar svg { width: 24px; height: 24px; }
.toolbar .on { border: 1px solid #b0b0b0; border-radius: 3px; background: #dcdcdc; padding-left: 4px; width: 32px; margin-right: 1px; }
.toolbar .off svg, .atools .off { filter: grayscale(.8); opacity: .32; }
.toolbar .drop { width: 45px; }
.drop::after, .caret::before, .mini::after { content: ""; border: 4px solid transparent; border-top-color: #555; border-bottom: 0; display: block; margin-left: 5px; }
.off.drop::after, .mini::after { opacity: .4; }
.mini::after { position: absolute; right: 7px; bottom: 2px; border-width: 3px 3px 0; }
.grip { flex: none; width: 16.5px; height: 16px; background: radial-gradient(circle, #aaa .7px, transparent .9px) 6px 0 / 4px 3px; background-clip: content-box; padding: 0 3px 0 6px; }
.grip:first-child { width: 12px; padding: 0 3px 0 4px; }
.grip.tight { width: 14px; padding-right: 1px; padding-left: 5px; }

.body { flex: 1; display: flex; gap: 6px; min-height: 0; padding-top: 1px; }
.docks { width: 193px; flex: none; display: flex; flex-direction: column; }
.dock { display: flex; flex-direction: column; }
.dock header { display: flex; align-items: center; height: 20px; padding: 0 2px 0 4px; gap: 3px; }
.dock header span { flex: 1; letter-spacing: .15px; }
.wb { width: 11px; height: 11px; fill: none; stroke: #555; stroke-width: 1; }
.wb .x { stroke-width: 1.6; }
.mini-tools { display: flex; align-items: center; gap: 9px; height: 30px; padding-left: 8px; }
.mini-tools svg { width: 16px; height: 16px; }
.mini-tools .caret { width: 8px; margin: 0 -1px 0 -3px; }
.mini-tools .caret::before { margin: 0; }
.more { font-size: 17px; margin: -4px 0 0 9px; color: #444; }
ul { list-style: none; margin: 0; padding: 0; background: #fff; border: 1px solid #b4b4b4; }
li { height: 19px; display: flex; align-items: center; white-space: nowrap; }
.tree { height: 376px; padding-top: 1px; }
.tree li { padding-left: 8px; }
.tree li::before { content: ""; width: 4px; height: 7px; margin-right: 11px; }
.tree .ex::before { background: #5c5c5c; clip-path: polygon(0 0, 100% 50%, 0 100%); }
.tree svg { width: 16px; height: 16px; margin-right: 6px; }
.tree .wide { letter-spacing: .25px; }
.tree .long { letter-spacing: .1px; }
.browser header { height: 19px; }
.split { height: 6px; background: radial-gradient(circle, #aaa .7px, transparent .9px) 0 1px / 3px 3px content-box; padding: 1px 86px 2px 90px; }
.layers { flex: 1; }
.layers .mini-tools { padding-bottom: 1px; }
.layerlist { flex: 1; font-weight: 700; font-size: 14px; letter-spacing: .3px; padding-top: 1px; }
.layerlist li { padding-left: 23px; position: relative; }
.layerlist .sel { background: #308cc6; color: #fff; }
.cb { width: 13px; height: 13px; margin-right: 7px; }
.cb rect { fill: #fff; stroke: #999; }
.cb path { fill: none; stroke: #111; stroke-width: 2; }
.sw { width: 16px; height: 16px; border: 1px solid #6b5057; margin-right: 6px; }
.pale { background: #f4a5b2; }
.pink { background: #e15989; }
.dot { border: 0; fill: #c69a3c; stroke: #6d6a4d; }
.sel span { text-decoration: underline; text-underline-offset: 2px; }
.chip { position: absolute; right: 1px; top: 3px; width: 18px; height: 13px; color: #777; --chip: #fff; }
.sel .chip { color: #2c5f85; --chip: #3d7aa6; }

.map { flex: 1; background: #fff; border: 1px solid #b4b4b4; overflow: hidden; }
.map svg { width: 1639px; height: 844px; }
.tracts path { fill: none; stroke: #2b2229; stroke-width: 2.9; stroke-linejoin: round; }
.tracts .area { fill: #e15989; }
.pts circle { fill: #ff9e17; stroke: #3a2a18; stroke-width: 1; }
.tiny { fill: #232323; }

.status { height: 31px; flex: none; padding: 3px 4px; }
.locate { width: 273px; height: 25px; display: flex; align-items: center; gap: 7px; padding-left: 8px; background: #fff; border: 1px solid #aaa; border-radius: 3px; color: #7d7d7d; letter-spacing: .1px; }
.locate svg { width: 13px; height: 13px; fill: none; stroke: #777; stroke-width: 1.2; }

.attr { position: absolute; left: 892px; top: 0; width: 947px; height: 1047px; background: #efefef; border-left: 2px solid #b0b0b0; box-shadow: 0 0 14px rgba(0, 0, 0, .35); display: flex; flex-direction: column; overflow: visible; clip-path: inset(0 0 0 -16px); }
.attr .titlebar { display: flex; margin-left: -2px; border-left: 1px solid #1e1c1d; }
.atitle { padding-left: 265px; flex: 1; }
.winctl { width: 84px; height: 31px; margin-right: 2px; margin-left: -84px; }
.atools { height: 31px; flex: none; display: flex; align-items: center; padding: 0 0 2px 6px; gap: 9px; }
.atools svg { width: 16px; height: 16px; }
.atools i { width: 1px; height: 11px; background: #ccc; margin: 0 -1.5px; }
.tablebox { flex: 1; border-top: 1px solid #b4b4b4; background: linear-gradient(90deg, #efefef 12px, #fff 12px); overflow: hidden; }
table { border-collapse: separate; border-spacing: 0; table-layout: fixed; width: 1013px; background: #fff; }
td, th { padding: 0; height: 30px; border-right: 1px solid #c3c3c3; border-bottom: 1px solid #c3c3c3; font-weight: 400; white-space: nowrap; overflow: hidden; text-align: center; width: 100px; }
td { text-align: left; padding: 0 0 1px 3px; letter-spacing: .17px; }
tr:first-child th { height: 21px; line-height: 18px; padding-top: 1px; background: linear-gradient(#fff, #eee); border-bottom-color: #a8a8a8; }
th:first-child { width: 13px; background: linear-gradient(90deg, #fdfdfd, #eee); border-right-color: #a8a8a8; }
tr:nth-child(odd) td { background: #f7f7f7; }
.tightcol span { display: flex; justify-content: center; margin: 0 1px 0 2px; overflow: hidden; letter-spacing: .15px; }
.hscroll { height: 15px; flex: none; display: flex; background: #e4e4e4; border-top: 1px solid #b4b4b4; border-bottom: 1px solid #b4b4b4; }
.hscroll i { width: 14px; background: #fafafa; border-right: 1px solid #b4b4b4; display: flex; align-items: center; padding-left: 4px; }
.hscroll i::before { content: ""; border: 4px solid transparent; border-left-width: 0; border-right-color: #555; }
.thumb { width: 347px; background: linear-gradient(#fff, #f2f2f2); border-right: 1px solid #b4b4b4; }
.hscroll .r { margin-left: auto; width: 7px; border-right: 0; border-left: 1px solid #b4b4b4; }
.hscroll .r::before { border-left: 4px solid #555; border-right: 0; }
.afoot { height: 28px; flex: none; display: flex; padding: 0 0 0 2px; justify-content: space-between; }
.btn { width: 156px; height: 24px; margin-top: 1px; border: 1px solid #aaa; border-radius: 3px; background: linear-gradient(#fff, #f0f0f0); display: flex; align-items: center; padding-left: 3px; gap: 2px; white-space: nowrap; letter-spacing: .1px; }
.btn svg { width: 15px; height: 16px; }
.sm { border: 3px solid transparent; border-top-color: #555; border-bottom: 0; margin: 13px 2px 0 auto; }
.views { display: flex; width: 38px; overflow: hidden; }
.views span { width: 19px; flex: none; height: 24px; padding-top: 4px; }
.views svg { width: 15px; height: 16px; }
.views .act { width: 24px; border: 1px solid #aaa; border-radius: 3px; background: #dcdcdc; padding: 4px 0 0 4px; margin-top: 1px; }
```
